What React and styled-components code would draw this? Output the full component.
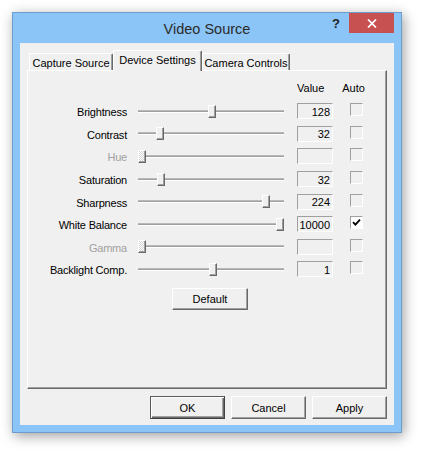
import React from 'react'
import styled, { createGlobalStyle } from 'styled-components'

const GlobalStyle = createGlobalStyle`
  html, body { margin: 0; padding: 0; background: #ffffff; }
  body { font-family: "Liberation Sans", Arial, sans-serif; }
`

const settings = [
  { label: 'Brightness', pos: 0.507, value: '128' },
  { label: 'Contrast', pos: 0.13, value: '32' },
  { label: 'Hue', pos: 0, value: '', disabled: true },
  { label: 'Saturation', pos: 0.135, value: '32' },
  { label: 'Sharpness', pos: 0.9, value: '224' },
  { label: 'White Balance', pos: 1, value: '10000', auto: true },
  { label: 'Gamma', pos: 0, value: '', disabled: true },
  { label: 'Backlight Comp.', pos: 0.515, value: '1' },
]

const TRACK_W = 146
const THUMB_W = 8

const Page = styled.div`
  padding: 12px 0 0 12px;
  width: 422px;
  height: 454px;
  box-sizing: border-box;
`

const Window = styled.div`
  width: 390px;
  height: 421px;
  box-sizing: border-box;
  background: #8bc4f6;
  border: 1px solid #6f9dcb;
  padding: 0 7px 7px 7px;
  display: flex;
  flex-direction: column;
  box-shadow: 2px 3px 12px rgba(0, 0, 0, 0.38);
`

const TitleBar = styled.div`
  height: 30px;
  display: grid;
  grid-template-columns: 1fr auto 1fr;
  align-items: center;
`

const Title = styled.div`
  grid-column: 2;
  font-size: 14.5px;
  color: #2b2b2b;
  padding-top: 1px;
`

const Caption = styled.div`
  grid-column: 3;
  align-self: start;
  justify-self: end;
  display: flex;
`

const HelpBtn = styled.div`
  width: 26px;
  height: 20px;
  display: flex;
  align-items: center;
  justify-content: center;
  font-weight: bold;
  font-size: 13px;
  color: #222;
`

const CloseBtn = styled.div`
  width: 45px;
  height: 20px;
  background: #c75050;
  display: flex;
  align-items: center;
  justify-content: center;
`

const Client = styled.div`
  flex: 1;
  background: #f0f0f0;
  padding: 7px 7px 6px 7px;
  display: flex;
  flex-direction: column;
  font-size: 11px;
  color: #000;
`

const TabStrip = styled.div`
  height: 20px;
  display: flex;
  align-items: flex-end;
  padding-left: 2px;
  position: relative;
  z-index: 1;
`

const Tab = styled.div`
  width: ${p => p.$w}px;
  height: ${p => (p.$active ? 21 : 17)}px;
  margin-bottom: ${p => (p.$active ? -1 : 0)}px;
  box-sizing: border-box;
  background: #f0f0f0;
  border-top: 1px solid #fff;
  border-left: 1px solid #fff;
  border-right: 1px solid #696969;
  box-shadow: inset -1px 0 #a0a0a0;
  border-radius: 2px 2px 0 0;
  display: flex;
  align-items: ${p => (p.$active ? 'flex-start' : 'center')};
  padding-top: ${p => (p.$active ? 3 : 1)}px;
  justify-content: center;
  font-size: 11px;
  white-space: nowrap;
`

const Panel = styled.div`
  position: relative;
  height: 319px;
  box-sizing: border-box;
  border-top: 1px solid #fff;
  border-left: 1px solid #fff;
  border-right: 1px solid #696969;
  border-bottom: 1px solid #696969;
  box-shadow: inset -1px -1px #a0a0a0;
  padding-top: 5px;
  display: flex;
  flex-direction: column;
`

const Grid = styled.div`
  display: grid;
  grid-template-columns: 99px ${TRACK_W}px 38px 19px;
  column-gap: 11px;
  grid-template-rows: 24px repeat(${settings.length}, 22.6px);
`

const Header = styled.div`
  grid-column: ${p => p.$col};
  justify-self: ${p => p.$align || 'start'};
  align-self: center;
  margin-left: ${p => p.$ml || 0}px;
`

const Label = styled.div`
  justify-self: end;
  align-self: center;
  margin-top: 2px;
  white-space: nowrap;
  letter-spacing: -0.2px;
  color: ${p => (p.$disabled ? '#a0a0a0' : '#000')};
`

const Slider = styled.div`
  position: relative;
  align-self: center;
  height: 3px;
  box-sizing: border-box;
  background: #a0a0a0;
  border-top: 1px solid #b9b9b9;
  border-bottom: 1px solid #fff;
`

const Thumb = styled.div`
  position: absolute;
  top: -6px;
  width: ${THUMB_W}px;
  height: 13px;
  box-sizing: border-box;
  border-top: 1px solid #fff;
  border-left: 1px solid #fff;
  border-right: 1px solid #696969;
  border-bottom: 1px solid #696969;
  box-shadow: inset -1px -1px #a0a0a0;
  background: ${p =>
    p.$disabled
      ? 'repeating-conic-gradient(#ffffff 0 25%, #d4d4d4 0 50%) 0 0 / 2px 2px'
      : '#f0f0f0'};
`

const ValueBox = styled.div`
  justify-self: end;
  align-self: center;
  width: 36px;
  height: 16px;
  box-sizing: border-box;
  border-top: 1px solid #a0a0a0;
  border-left: 1px solid #a0a0a0;
  border-bottom: 1px solid #fff;
  border-right: 1px solid #fff;
  display: flex;
  align-items: center;
  justify-content: flex-end;
  padding-right: 2px;
  padding-top: 1px;
`

const CheckBox = styled.div`
  justify-self: end;
  align-self: center;
  margin-bottom: 3px;
  width: 13px;
  height: 13px;
  box-sizing: border-box;
  border-top: 1px solid #a0a0a0;
  border-left: 1px solid #a0a0a0;
  border-bottom: 1px solid #fff;
  border-right: 1px solid #fff;
  background: ${p => (p.$checked ? '#fff' : '#f0f0f0')};
  display: flex;
  align-items: center;
  justify-content: center;
`

const DefaultRow = styled.div`
  margin-top: 7px;
  padding-left: 144px;
`

const Button = styled.div`
  width: ${p => p.$w || 75}px;
  height: ${p => p.$h || 23}px;
  box-sizing: border-box;
  background: #f0f0f0;
  display: flex;
  align-items: center;
  justify-content: center;
  border-top: 1px solid ${p => (p.$default ? '#5a5a5a' : '#fff')};
  border-left: 1px solid ${p => (p.$default ? '#5a5a5a' : '#fff')};
  border-right: 1px solid ${p => (p.$default ? '#404040' : '#696969')};
  border-bottom: 1px solid ${p => (p.$default ? '#404040' : '#696969')};
  box-shadow: ${p =>
    p.$default
      ? 'inset 1px 1px #fff, inset -1px -1px #696969, inset -2px -2px #a0a0a0'
      : 'inset -1px -1px #a0a0a0'};
`

const ButtonRow = styled.div`
  margin-top: 7px;
  display: flex;
  justify-content: flex-end;
  gap: 6px;
`

function CheckMark() {
  return (
    <svg width="9" height="9" viewBox="0 0 9 9">
      <path d="M1 4.2 L3.4 6.6 L8 1.6" stroke="#000" strokeWidth="1.8" fill="none" />
    </svg>
  )
}

function App() {
  return (
    <Page>
      <GlobalStyle />
      <Window>
        <TitleBar>
          <Title>Video Source</Title>
          <Caption>
            <HelpBtn>?</HelpBtn>
            <CloseBtn>
              <svg width="10" height="9" viewBox="0 0 10 9">
                <path d="M1 0.5 L9 8.5 M9 0.5 L1 8.5" stroke="#fff" strokeWidth="1.7" />
              </svg>
            </CloseBtn>
          </Caption>
        </TitleBar>
        <Client>
          <TabStrip>
            <Tab $w={84}>Capture Source</Tab>
            <Tab $w={89} $active>Device Settings</Tab>
            <Tab $w={88}>Camera Controls</Tab>
          </TabStrip>
          <Panel>
            <Grid>
              <Header $col={3} $ml={2}>Value</Header>
              <Header $col={4} $align="center">Auto</Header>
              {settings.map(s => (
                <React.Fragment key={s.label}>
                  <Label $disabled={s.disabled}>{s.label}</Label>
                  <Slider>
                    <Thumb
                      $disabled={s.disabled}
                      style={{ left: Math.round(s.pos * (TRACK_W - THUMB_W)) }}
                    />
                  </Slider>
                  <ValueBox>{s.value}</ValueBox>
                  <CheckBox $checked={s.auto}>{s.auto && <CheckMark />}</CheckBox>
                </React.Fragment>
              ))}
            </Grid>
            <DefaultRow>
              <Button $w={76} $h={22}>Default</Button>
            </DefaultRow>
          </Panel>
          <ButtonRow>
            <Button $default>OK</Button>
            <Button>Cancel</Button>
            <Button>Apply</Button>
          </ButtonRow>
        </Client>
      </Window>
    </Page>
  )
}

export default App
